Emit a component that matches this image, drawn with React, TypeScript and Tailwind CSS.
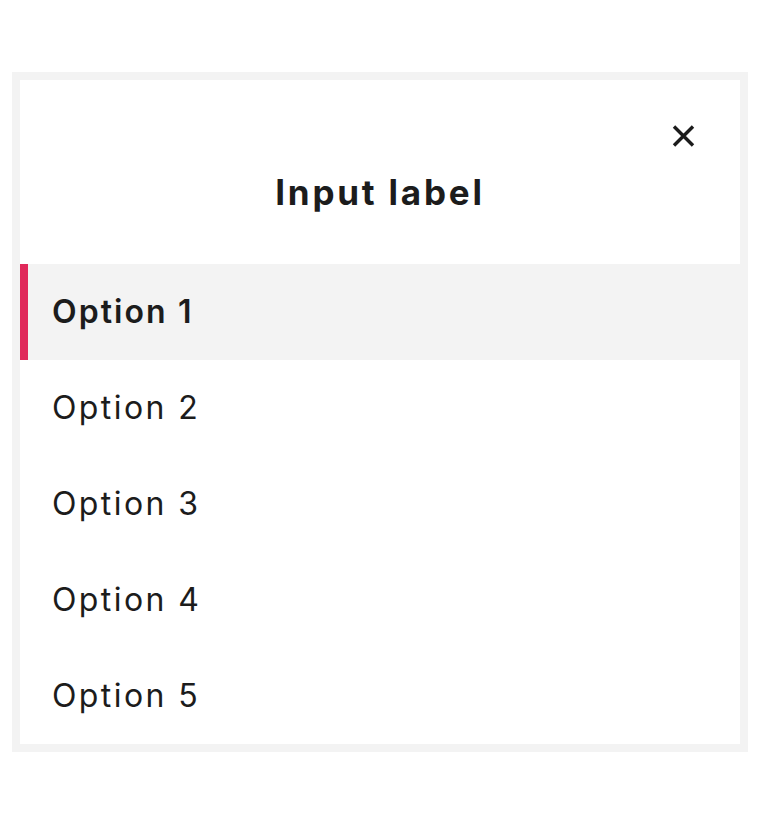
import React from "react";

const options = ["Option 1", "Option 2", "Option 3", "Option 4", "Option 5"];

const App = () => {
  const selected = 0;
  return (
    <div className="w-[762px] h-[824px] bg-white pt-[72px] pl-[12px] font-['Inter',sans-serif] text-[#1c1c1c]">
      <div className="w-[736px] border-8 border-[#f3f3f3] bg-white">
        {/* Header */}
        <div className="h-[184px] flex flex-col">
          <div className="flex justify-end pt-[45px] pr-[45px]">
            <button className="w-[23px] h-[22px]" aria-label="Close">
              <svg viewBox="0 0 23 22" width="23" height="22" fill="none" stroke="#1c1c1c" strokeWidth="3.4">
                <path d="M2 1.5 L21 20.5 M21 1.5 L2 20.5" />
              </svg>
            </button>
          </div>
          <h2 className="mt-[25px] text-center text-[35px] leading-[40px] font-bold tracking-[0.08em]">
            Input label
          </h2>
        </div>

        {/* Options */}
        <ul>
          {options.map((opt, i) => (
            <li
              key={opt}
              className={
                i === selected
                  ? "h-[96px] flex items-center pl-[24px] border-l-8 border-[#e0285a] bg-[#f3f3f3] font-semibold text-[32px] tracking-[0.065em]"
                  : "h-[96px] flex items-center pl-[32px] text-[32px] tracking-[0.075em]"
              }
            >
              {opt}
            </li>
          ))}
        </ul>
      </div>
    </div>
  );
};

export default App;
